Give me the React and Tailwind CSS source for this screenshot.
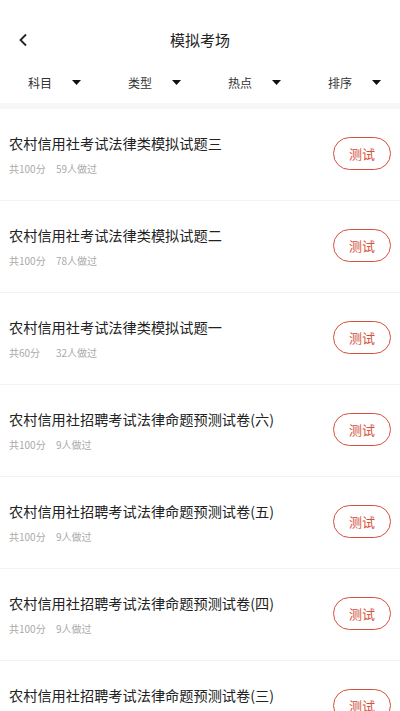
const items = [
  { t: '农村信用社考试法律类模拟试题三', s: '共100分', n: '59人做过' },
  { t: '农村信用社考试法律类模拟试题二', s: '共100分', n: '78人做过' },
  { t: '农村信用社考试法律类模拟试题一', s: '共60分', n: '32人做过' },
  { t: '农村信用社招聘考试法律命题预测试卷(六)', s: '共100分', n: '9人做过' },
  { t: '农村信用社招聘考试法律命题预测试卷(五)', s: '共100分', n: '9人做过' },
  { t: '农村信用社招聘考试法律命题预测试卷(四)', s: '共100分', n: '9人做过' },
  { t: '农村信用社招聘考试法律命题预测试卷(三)', s: '共100分', n: '9人做过' },
]

const filters = ['科目', '类型', '热点', '排序']

const font = { fontFamily: '"Noto Sans CJK SC", Roboto, sans-serif' }

export default function App() {
  return (
    <div className="w-[400px] h-[711px] overflow-hidden bg-white" style={font}>
      <div className="h-[62px] pt-[20px] relative flex items-center justify-center">
        <svg className="absolute left-[18px] top-[33px]" width="11" height="14" viewBox="0 0 11 14">
          <path d="M8 1.5 L2.5 7 L8 12.5" fill="none" stroke="#222" strokeWidth="1.8" />
        </svg>
        <div className="text-[15px] text-[#222] leading-none mt-[-4px]">模拟考场</div>
      </div>
      <div className="h-[41px] grid grid-cols-4">
        {filters.map((f) => (
          <div key={f} className="flex items-center pl-[28px]">
            <span className="text-[12px] text-[#333] w-[44px] leading-none">{f}</span>
            <svg width="9" height="5" viewBox="0 0 9 5">
              <path d="M0 0 L9 0 L4.5 5 Z" fill="#111" />
            </svg>
          </div>
        ))}
      </div>
      <div className="h-[6px] bg-[#f7f7f7]" />
      {items.map((it, i) => (
        <div key={i} className="h-[92px] border-b border-[#f3f3f3] flex items-center pl-[9px] pr-[9px]">
          <div className="flex-1 flex flex-col">
            <div className="text-[14.2px] text-[#222] leading-none mt-[1px]">{it.t}</div>
            <div className="flex text-[10px] text-[#aaa] leading-none mt-[14px]">
              <span className="w-[47px]">{it.s}</span>
              <span>{it.n}</span>
            </div>
          </div>
          <div className="w-[58px] h-[33px] rounded-full border border-[#d4503c] flex items-center justify-center text-[13px] text-[#d4503c] mt-[-2px]">
            测试
          </div>
        </div>
      ))}
    </div>
  )
}
